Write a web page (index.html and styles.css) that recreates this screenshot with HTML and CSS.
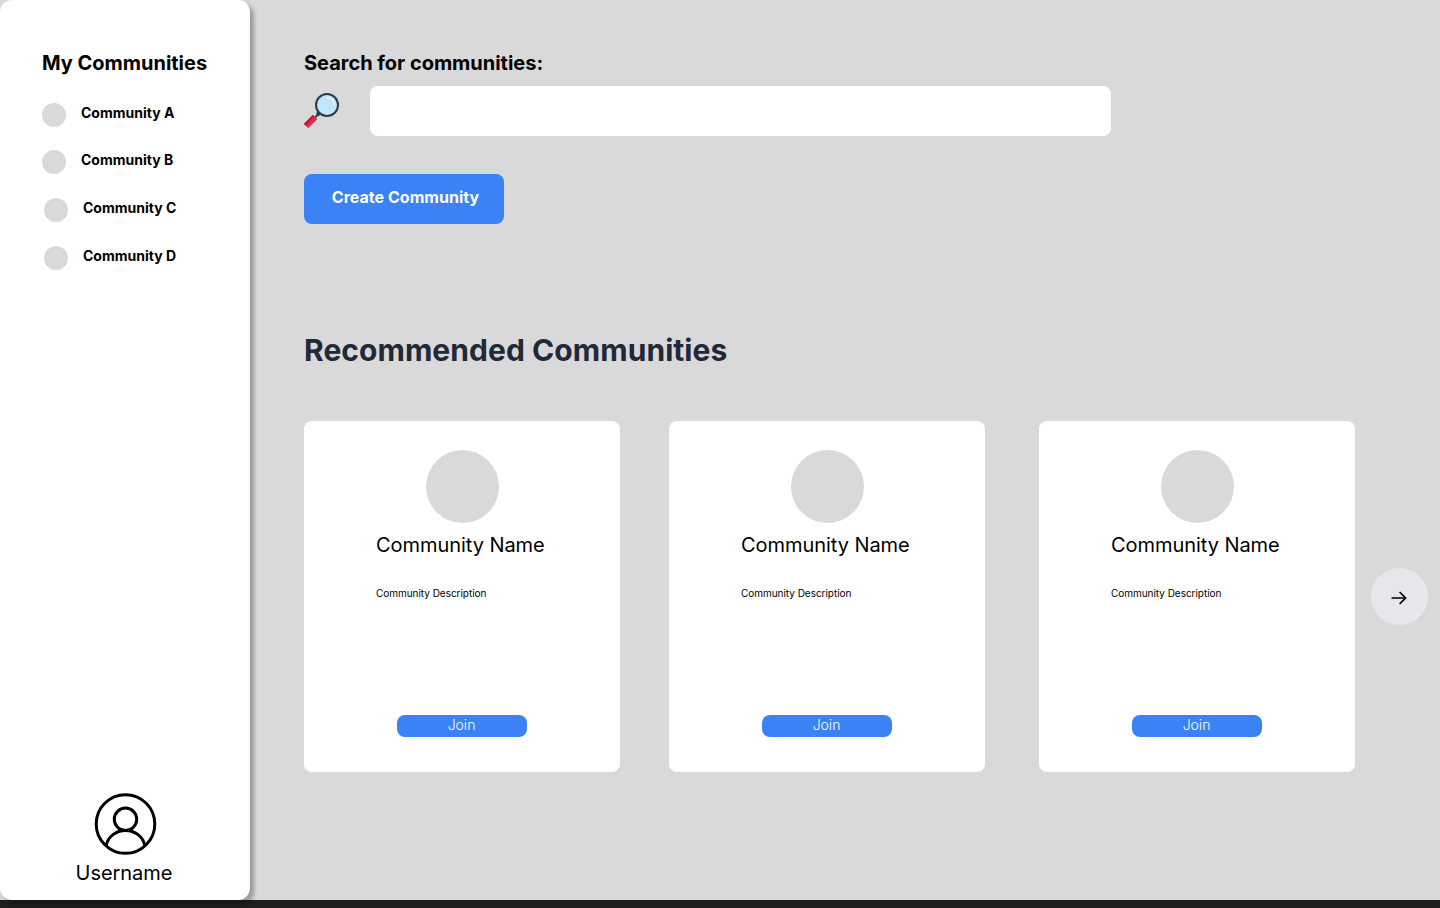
FILE: index.html
```html
<!DOCTYPE html>
<html lang="en">
<head>
<meta charset="utf-8">
<title>Communities</title>
<link rel="stylesheet" href="styles.css">
</head>
<body>
<div class="app">
  <aside class="sidebar">
    <h2 class="sidebar-title">My Communities</h2>
    <ul class="list">
      <li class="item"><span class="dot"></span><span class="label">Community A</span></li>
      <li class="item"><span class="dot"></span><span class="label">Community B</span></li>
      <li class="item item-inset"><span class="dot"></span><span class="label">Community C</span></li>
      <li class="item item-inset"><span class="dot"></span><span class="label">Community D</span></li>
    </ul>
    <div class="user">
      <svg class="user-icon" viewBox="0 0 62 62" width="62" height="62" fill="none" stroke="#000" stroke-width="3">
        <circle cx="31.500" cy="31" r="29.300"/>
        <circle cx="31.500" cy="26.300" r="11.200"/>
        <path d="M12.200 52.500C14 43.500 22 37.500 31.500 37.500S49 43.500 50.800 52.500"/>
      </svg>
      <span class="username">Username</span>
    </div>
  </aside>
  <main class="main">
    <h2 class="search-title">Search for communities:</h2>
    <div class="search-row">
      <svg class="search-icon" viewBox="0 0 36 36" width="36" height="36">
        <path d="M11 24.500l5-5" stroke="#2b3b4c" stroke-width="2"/>
        <path d="M13.300 21.700l2.700-2.500" stroke="#2b3b4c" stroke-width="4"/>
        <path d="M.5 30.200l7.800-7.800q.7-.7 1.400 0l3 3q.7.700 0 1.400l-7.800 7.800q-.7.700-1.400 0l-3-3q-.7-.7 0-1.400z" fill="#dd2e44"/>
        <path d="M.5 30.200l7.800-7.800q.7-.7 1.400 0l.5.500-8.400 9.800-1.300-1.100q-.7-.7 0-1.400z" fill="#be1931"/>
        <circle cx="23" cy="12" r="11" fill="#bfe7fb" stroke="#2b3b4c" stroke-width="2"/>
        <path d="M23 4.500a7.500 7.500 0 0 1 7.500 7" fill="none" stroke="#fff" stroke-width="1.200" stroke-linecap="round"/>
      </svg>
      <input class="search-input" type="text" aria-label="Search for communities">
    </div>
    <button class="create">Create Community</button>
    <h1 class="heading">Recommended Communities</h1>
    <div class="carousel">
      <article class="card">
        <div class="avatar"></div>
        <div class="card-text"><h3 class="card-name">Community Name</h3><p class="card-desc">Community Description</p></div>
        <button class="join">Join</button>
      </article>
      <article class="card">
        <div class="avatar"></div>
        <div class="card-text"><h3 class="card-name">Community Name</h3><p class="card-desc">Community Description</p></div>
        <button class="join">Join</button>
      </article>
      <article class="card card-last">
        <div class="avatar"></div>
        <div class="card-text"><h3 class="card-name">Community Name</h3><p class="card-desc">Community Description</p></div>
        <button class="join">Join</button>
      </article>
      <button class="next" aria-label="Next">
        <svg viewBox="0 0 16 16" width="16" height="16" fill="none" stroke="#000" stroke-width="1.700"><path d="M.5 8H14.500M8.600 2l6 6-6 6"/></svg>
      </button>
    </div>
  </main>
</div>
</body>
</html>
```
FILE: styles.css
```css
* { box-sizing: border-box; margin: 0; padding: 0; }
body { background: #1e1e1e; font-family: Inter, "Liberation Sans", sans-serif; color: #000; height: 908px; overflow: hidden; }
button { border: 0; font-family: inherit; }
.app { display: flex; height: 900px; background: #d9d9d9; }
.sidebar { width: 250px; height: 900px; flex: none; background: #fff; border-radius: 12px; box-shadow: 4px 4px 4px rgba(0, 0, 0, .29); padding: 51px 0 0 42px; display: flex; flex-direction: column; }
.sidebar-title, .search-title { font-size: 20px; line-height: 25px; font-weight: 700; }
.sidebar-title, .search-title { letter-spacing: -.02px; }
.list { list-style: none; padding-top: 27px; display: flex; flex-direction: column; gap: 24px; }
.item { display: flex; gap: 15px; height: 24px; }
.item:nth-child(1) { margin-bottom: -1px; }
.item-inset { padding-left: 2px; }
.dot { width: 24px; height: 24px; border-radius: 50%; background: #d9d9d9; }
.label { font-size: 14px; line-height: 20px; font-weight: 700; }
.user { margin: auto 42px 14px 0; display: flex; flex-direction: column; align-items: center; gap: 5px; }
.user-icon { display: block; overflow: visible; }
.username { font-size: 20px; line-height: 26px; margin-right: 2px; letter-spacing: -.05px; }
.main { flex: 1; padding: 51px 0 0 54px; display: flex; flex-direction: column; align-items: flex-start; }
.search-row { display: flex; align-items: center; gap: 30px; padding-top: 10px; }
.search-icon { display: block; }
.search-input { width: 741px; height: 50px; border: 0; border-radius: 8px; background: #fff; padding: 0 16px; font: 16px Inter, sans-serif; }
.create { margin-top: 38px; width: 200px; height: 50px; border-radius: 8px; background: #3b82f6; color: #fff; font-size: 16px; font-weight: 700; letter-spacing: .03px; padding: 0 0 5px 3px; }
.heading { margin-top: 108px; font-size: 30px; line-height: 36px; font-weight: 700; letter-spacing: .06px; color: #1f2937; }
.carousel { margin-top: 53px; display: flex; align-items: center; }
.card { width: 316px; height: 351px; margin-right: 49px; border-radius: 8px; background: #fff; padding: 29px 0 35px; display: flex; flex-direction: column; align-items: center; flex: none; }
.card + .card { margin-right: 54px; }
.card + .card-last { margin-right: 16px; }
.avatar { width: 73px; height: 73px; border-radius: 50%; background: #d9d9d9; margin-left: 1px; }
.card-text { width: 100%; padding: 9px 0 0 72px; }
.card-name { font-size: 20px; line-height: 26px; font-weight: 400; letter-spacing: -.05px; }
.card-desc { font-size: 10px; line-height: 12px; margin-top: 29px; letter-spacing: -.03px; }
.join { margin-top: auto; width: 130px; height: 22px; border-radius: 8px; background: #3b82f6; color: #fff; font-size: 14px; font-weight: 300; padding: 0 1px 3px 0; }
.next { width: 57px; height: 57px; border-radius: 50%; background: #e5e7eb; display: flex; align-items: center; justify-content: center; padding: 2px 1px 0 0; }
```
